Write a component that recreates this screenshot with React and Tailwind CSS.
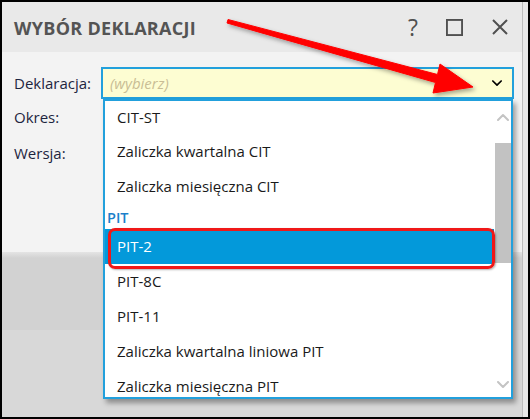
import React from 'react';

const font = { fontFamily: '"Open Sans", "Noto Sans", sans-serif' };

const items = [
  { label: 'CIT-ST', h: 'h-[33px]' },
  { label: 'Zaliczka kwartalna CIT' },
  { label: 'Zaliczka miesięczna CIT' },
  { label: 'PIT', header: true },
  { label: 'PIT-2', selected: true },
  { label: 'PIT-8C' },
  { label: 'PIT-11' },
  { label: 'Zaliczka kwartalna liniowa PIT' },
  { label: 'Zaliczka miesięczna PIT' },
];

function Chevron({ className, up = false }) {
  return (
    <svg viewBox="0 0 12 8" className={className} fill="none" stroke="currentColor" strokeWidth="2" strokeLinecap="round" strokeLinejoin="round">
      <path d={up ? 'M1 7 L6 2 L11 7' : 'M1 1 L6 6 L11 1'} />
    </svg>
  );
}

function Dropdown() {
  return (
    <div className="absolute left-[101px] top-[97px] w-[410px] h-[300px] border-2 border-[#22a0dc] bg-white shadow-[3px_4px_5px_rgba(0,0,0,0.35)] flex">
      <div className="flex-1 flex flex-col overflow-hidden">
        {items.map((it) =>
          it.header ? (
            <div key={it.label} className="h-[25px] shrink-0 flex items-end pl-[2px] text-[14.5px] font-semibold text-[#1c7fca]">
              {it.label}
            </div>
          ) : (
            <div
              key={it.label}
              className={`${it.h || 'h-[35px]'} shrink-0 flex items-center pl-[12px] text-[15px] ${it.selected ? 'bg-[#0399da] text-white' : 'text-[#1a1a1a]'}`}
            >
              {it.label}
            </div>
          )
        )}
      </div>
      {/* scrollbar */}
      <div className="w-[17px] flex flex-col items-center bg-white">
        <Chevron up className="w-[12px] h-[8px] text-[#c4c4c4] mt-[12px]" />
        <div className="w-[16px] h-[120px] bg-[#c2c2c2] mt-[22px]" />
        <div className="flex-1" />
        <Chevron className="w-[12px] h-[8px] text-[#c4c4c4] mb-[8px]" />
      </div>
      {/* red highlight around selected */}
      <div className="absolute left-[3px] top-[127px] w-[387px] h-[41px] rounded-[7px] border-[3px] border-[#f01818] shadow-[1px_1px_2px_rgba(0,0,0,0.3)]" />
    </div>
  );
}

function Arrow() {
  return (
    <svg className="absolute left-0 top-0 pointer-events-none" width="530" height="419">
      <defs>
        <filter id="sh" x="-10%" y="-10%" width="130%" height="150%">
          <feDropShadow dx="2" dy="2.5" stdDeviation="2" floodColor="#000" floodOpacity="0.35" />
        </filter>
      </defs>
      <polygon
        points="226,17.5 435.5,72.5 438,62 471,85 431,91 433.5,80.5 225,21"
        fill="#ff0000"
        stroke="#ff0000"
        strokeWidth="1"
        strokeLinejoin="round"
        filter="url(#sh)"
      />
    </svg>
  );
}

export default function App() {
  return (
    <div className="w-[530px] h-[419px] border-2 border-black bg-[#d4d4d4] relative overflow-hidden" style={font}>
      <div className="flex h-full">
        <div className="flex-1 flex flex-col">
          {/* title bar */}
          <div className="h-[50px] bg-[#e9e9e9] flex items-center pl-[12px] pr-[14px]">
            <div className="text-[18px] font-bold text-[#545454] tracking-[0.3px] mt-[2px]">WYBÓR DEKLARACJI</div>
            <div className="flex-1" />
            <div className="flex items-center text-[#505050]">
              <span className="text-[23px] font-medium leading-none w-[14px] text-center">?</span>
              <svg viewBox="0 0 18 18" className="w-[17px] h-[17px] ml-[26px]" fill="none" stroke="currentColor" strokeWidth="2">
                <rect x="1" y="1" width="16" height="16" />
              </svg>
              <svg viewBox="0 0 16 16" className="w-[16px] h-[16px] ml-[29px]" fill="none" stroke="currentColor" strokeWidth="2">
                <path d="M1 1 L15 15 M15 1 L1 15" />
              </svg>
            </div>
          </div>
          {/* content */}
          <div className="h-[200px] bg-[#f3f3f3] pt-[15px] pl-[12px] text-[15px] text-[#1d2540]">
            <div className="flex items-center h-[32px]">
              <div className="w-[87px]">Deklaracja:</div>
              <div className="w-[413px] h-[32px] border-2 border-[#22a0dc] bg-[#fdfdd2] flex items-center pl-[7px] pr-[10px]">
                <span className="italic text-[#c9bd95]">(wybierz)</span>
                <div className="flex-1" />
                <Chevron className="w-[10px] h-[7px] text-black" />
              </div>
            </div>
            <div className="h-[36px] flex items-center">Okres:</div>
            <div className="h-[36px] flex items-center">Wersja:</div>
          </div>
          {/* lower area */}
          <div className="h-[78px] bg-[linear-gradient(#e4e4e4,#d2d2d2_6px,#d2d2d2)]" />
          <div className="flex-1 bg-[#d8d8d8]" />
        </div>
        <div className="w-[6px] bg-[#e8e8e8] border-l border-[#bdbdbd]" />
      </div>
      <Dropdown />
      <Arrow />
    </div>
  );
}
